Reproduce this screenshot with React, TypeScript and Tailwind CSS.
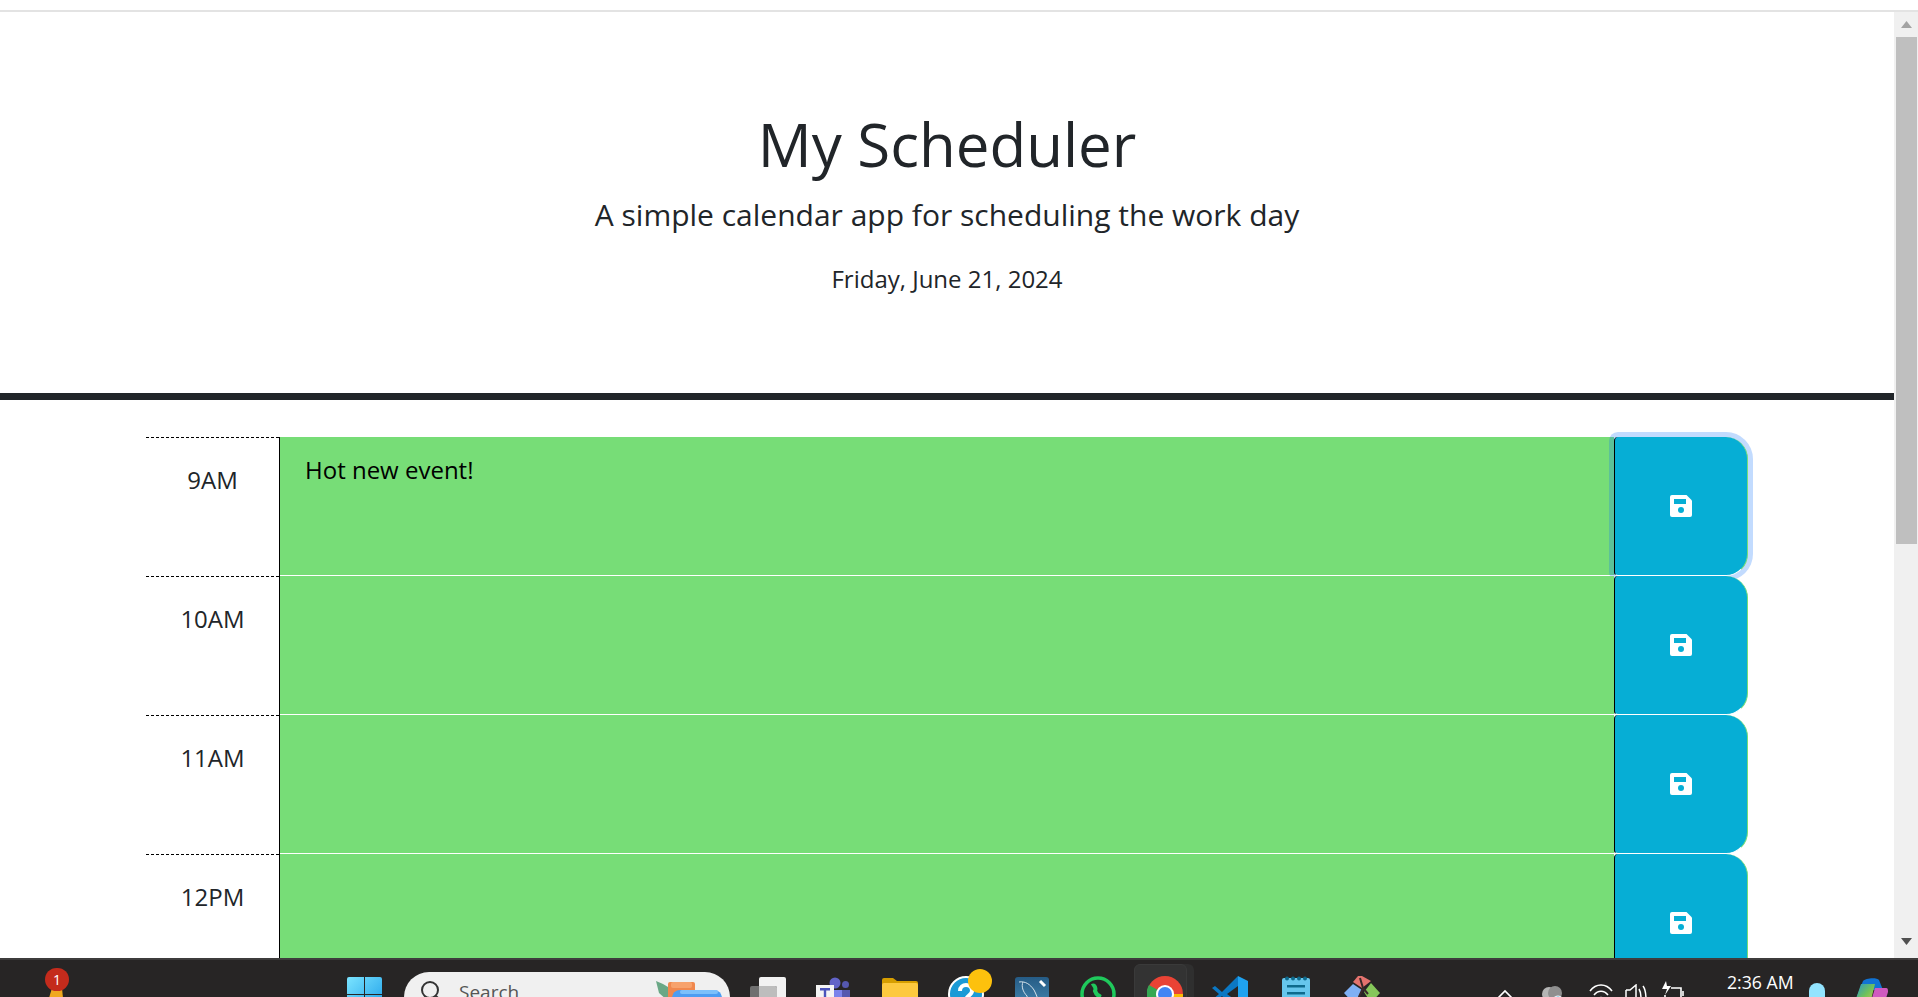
import React from "react";

const hours = ["9AM", "10AM", "11AM", "12PM"];

function SaveIcon() {
  return (
    <svg width="22" height="22" viewBox="0 0 22 22">
      <path d="M2 0H16.5L22 5.5V20a2 2 0 0 1-2 2H2a2 2 0 0 1-2-2V2a2 2 0 0 1 2-2Z" fill="#fff" />
      <rect x="4" y="4" width="12" height="5" fill="#06aed5" />
      <circle cx="11" cy="15" r="3" fill="#06aed5" />
    </svg>
  );
}

function Row({ label, text, focused }: { label: string; text?: string; focused?: boolean }) {
  return (
    <div className="flex h-[139px] w-[1602px] shrink-0">
      <div className="w-[134px] shrink-0 border-r border-r-black bg-[repeating-linear-gradient(to_right,#000_0,#000_3px,transparent_3px,transparent_5px)] bg-[length:100%_1px] bg-no-repeat pt-[21px] text-center text-[24px] leading-[44px] text-[#212529]">
        {label}
      </div>
      <textarea
        readOnly
        defaultValue={text}
        className="flex-1 resize-none border-b border-white bg-[#77dd77] px-[25px] pt-[15px] text-[24px] leading-[36px] text-black outline-none"
      />
      <button
        className={
          focused
            ? "flex w-[134px] shrink-0 items-center justify-center pr-[1px] rounded-l-[4px] rounded-r-[22px] border-l border-l-black border-r border-r-[#77dd77] border-b border-b-white bg-[#06aed5] shadow-[0_0_0_5px_rgba(13,110,253,0.25)]"
            : "flex w-[134px] shrink-0 items-center justify-center pr-[1px] rounded-l-[4px] rounded-r-[22px] border-l border-l-black border-r border-r-[#77dd77] border-b border-b-white bg-[#06aed5]"
        }
      >
        <SaveIcon />
      </button>
    </div>
  );
}

function Scrollbar() {
  return (
    <div className="flex w-[24px] shrink-0 flex-col items-center bg-[#f0f0f0]">
      <div className="flex h-[25px] w-full shrink-0 items-center justify-center">
        <svg width="11" height="7" viewBox="0 0 11 7"><path d="M5.5 0L11 7H0Z" fill="#a3a3a3" /></svg>
      </div>
      <div className="ml-[1px] h-[507px] w-[21px] shrink-0 bg-[#bfbfbf]" />
      <div className="mt-auto flex h-[21px] w-full shrink-0 items-start justify-center pt-[1px]">
        <svg width="11" height="7" viewBox="0 0 11 7"><path d="M0 0H11L5.5 7Z" fill="#505050" /></svg>
      </div>
    </div>
  );
}

function Taskbar() {
  return (
    <div className="flex h-[39px] shrink-0 items-start overflow-hidden border-t-2 border-[#3e3c3c] bg-[#272525] font-['Open_Sans',sans-serif]">
      {/* notification medal */}
      <div className="relative ml-[45px] mt-[8px] h-[40px] w-[25px] shrink-0">
        <svg className="absolute left-[1px] top-[20px]" width="18" height="20" viewBox="0 0 18 20"><path d="M6 0H16L18 20H0Z" fill="#f0a81e" /></svg>
        <div className="absolute left-0 top-0 flex h-[23px] w-[24px] items-center justify-center rounded-full bg-[#c42b1c] text-[14px] leading-none text-white">1</div>
      </div>
      {/* windows */}
      <svg className="ml-[277px] mt-[17px] shrink-0" width="35" height="35" viewBox="0 0 35 35">
        <defs><linearGradient id="w" x1="0" y1="0" x2="1" y2="1"><stop offset="0" stopColor="#7be4ff" /><stop offset="1" stopColor="#1b9de8" /></linearGradient></defs>
        <path d="M2 0H17V17H0V2a2 2 0 0 1 2-2ZM18 0H33a2 2 0 0 1 2 2V17H18ZM0 18H17V35H2a2 2 0 0 1-2-2ZM18 18H35V33a2 2 0 0 1-2 2H18Z" fill="url(#w)" />
      </svg>
      {/* search */}
      <div className="relative ml-[22px] mt-[12px] flex h-[50px] w-[326px] shrink-0 items-start rounded-[25px] bg-[#f0f0f0] pl-[16px] pt-[8px]">
        <svg width="22" height="22" viewBox="0 0 22 22" fill="none" stroke="#333" strokeWidth="2"><circle cx="10" cy="10" r="8" /><path d="M16 16l5 5" /></svg>
        <span className="ml-[17px] text-[19px] leading-[24px] text-[#555]">Search</span>
        <svg className="absolute left-[251px] top-[7px]" width="68" height="30" viewBox="0 0 68 30">
          <path d="M1 2l7 3 5 3v14L4 14Z" fill="#6aa886" />
          <rect x="13" y="3" width="27" height="24" rx="2" fill="#f0884e" />
          <rect x="16" y="3" width="21" height="6" rx="2" fill="#f7a26c" />
          <rect x="17" y="11" width="50" height="20" rx="8" fill="#4d9df2" />
          <rect x="25" y="11" width="38" height="4" rx="2" fill="#7cc0fb" />
        </svg>
      </div>
      {/* task view */}
      <svg className="ml-[20px] mt-[17px] shrink-0" width="36" height="35" viewBox="0 0 36 35">
        <rect x="9" y="0" width="27" height="32" rx="2" fill="#f2f2f2" />
        <rect x="0" y="9" width="27" height="26" rx="2" fill="#6f6f6f" />
        <path d="M9 9H25a2 2 0 0 1 2 2V32H9Z" fill="#bdbdbd" />
      </svg>
      {/* teams */}
      <svg className="ml-[30px] mt-[17px] shrink-0" width="35" height="35" viewBox="0 0 35 35">
        <circle cx="19" cy="6" r="5.5" fill="#6264c8" />
        <circle cx="29.5" cy="7.5" r="3.5" fill="#5558af" />
        <rect x="14" y="13" width="14" height="20" fill="#7b83eb" />
        <rect x="26" y="13" width="8" height="20" fill="#5558af" />
        <rect x="0" y="8" width="18" height="20" fill="#f4f4f4" />
        <path d="M4 11H14V13.5H10.2V22H7.8V13.5H4Z" fill="#4b53bc" />
      </svg>
      {/* folder */}
      <svg className="ml-[31px] mt-[18px] shrink-0" width="36" height="32" viewBox="0 0 36 32">
        <path d="M0 2a2 2 0 0 1 2-2H11L15 3H34a2 2 0 0 1 2 2V10H0Z" fill="#d69e00" />
        <rect x="0" y="5" width="36" height="27" rx="2" fill="#fdc93f" />
      </svg>
      {/* help with dot */}
      <svg className="ml-[30px] mt-[9px] shrink-0" width="44" height="44" viewBox="0 0 44 44">
        <circle cx="18" cy="25" r="17" fill="#1a9ad6" stroke="#fff" strokeWidth="2" />
        <path d="M12 22c0-8 12-8 12 0 0 4-6 5-6 9" fill="none" stroke="#fff" strokeWidth="4" />
        <circle cx="32" cy="12" r="12" fill="#fdc10d" />
      </svg>
      {/* mysql */}
      <svg className="ml-[23px] mt-[17px] shrink-0" width="34" height="35" viewBox="0 0 34 35">
        <defs><linearGradient id="m" x1="0" y1="0" x2="0" y2="1"><stop offset="0" stopColor="#255b85" /><stop offset="1" stopColor="#4a8fb8" /></linearGradient></defs>
        <rect x="0" y="0" width="34" height="35" rx="3" fill="url(#m)" />
        <path d="M4 5c6-1 11 2 15 8 2 4 4 8 4 12M8 5c-2 4 0 10 4 14l1 8" fill="none" stroke="#d4e2ea" strokeWidth="1" />
        <path d="M25 4l5 5" stroke="#fff" strokeWidth="3" />
      </svg>
      {/* whatsapp */}
      <svg className="ml-[31px] mt-[16px] shrink-0" width="36" height="36" viewBox="0 0 36 36">
        <circle cx="18" cy="18" r="16" fill="none" stroke="#1fc95c" strokeWidth="3.5" />
        <path d="M12 10c3-2 4 3 3 5 1 3 3 5 6 6" fill="none" stroke="#1fc95c" strokeWidth="4" />
      </svg>
      {/* chrome active */}
      <div className="relative ml-[18px] mt-[4px] h-[40px] w-[60px] shrink-0">
        <div className="absolute left-[7px] top-0 h-[40px] w-[53px] rounded-[6px] bg-[#2f2f2f]" />
        <div className="absolute left-0 top-0 h-[40px] w-[53px] rounded-[6px] border border-[#3a3a3a] bg-[#333333] pl-[12px] pt-[11px]">
          <svg width="36" height="36" viewBox="0 0 36 36" className="shrink-0">
            <circle cx="18" cy="18" r="18" fill="#e94335" />
            <path d="M2 9L18 18 9 34A18 18 0 0 1 2 9Z" fill="#34a853" />
            <path d="M18 18H36A18 18 0 0 1 9 34Z" fill="#fbbc04" />
            <circle cx="18" cy="18" r="9" fill="#fff" />
            <circle cx="18" cy="18" r="7" fill="#4285f4" />
          </svg>
        </div>
      </div>
      {/* vscode */}
      <svg className="ml-[18px] mt-[16px] shrink-0" width="36" height="36" viewBox="0 0 36 36">
        <path d="M26 0L36 5V31L26 36Z" fill="#1fa2f0" />
        <path d="M26 0L10 16 3 10 0 12 7 18 0 24 3 26 10 20 26 36V26L15 18 26 10Z" fill="#0b78c4" />
      </svg>
      {/* notepad */}
      <svg className="ml-[34px] mt-[16px] shrink-0" width="28" height="34" viewBox="0 0 28 34">
        <rect x="0" y="2" width="28" height="32" rx="2" fill="#66c6ec" />
        <circle cx="5" cy="2.5" r="2" fill="#0e6a8c" /><circle cx="11" cy="2.5" r="2" fill="#0e6a8c" /><circle cx="17" cy="2.5" r="2" fill="#0e6a8c" /><circle cx="23" cy="2.5" r="2" fill="#0e6a8c" />
        <rect x="5" y="9" width="18" height="2.5" fill="#0e6a8c" /><rect x="5" y="16" width="18" height="2.5" fill="#0e6a8c" />
      </svg>
      {/* pen */}
      <svg className="ml-[34px] mt-[16px] shrink-0" width="37" height="37" viewBox="0 0 37 37">
        <path d="M14 0L9 6 18 12 27 5 18 0Z" fill="#e4736e" />
        <path d="M0 17L9 8 18 14 10 28Z" fill="#7fb0f5" />
        <path d="M20 16L27 7 36 17 27 27Z" fill="#86c75a" />
        <path d="M16 2L19 12M19 12L15 21M19 12L24 18" stroke="#3a2a2a" strokeWidth="2" fill="none" />
      </svg>
      {/* tray */}
      <svg className="ml-[116px] mt-[29px] shrink-0" width="16" height="10" viewBox="0 0 16 10" fill="none" stroke="#fff" strokeWidth="1.6"><path d="M1 9L8 2l7 7" /></svg>
      <svg className="ml-[28px] mt-[26px] shrink-0" width="23" height="20" viewBox="0 0 23 20">
        <circle cx="8" cy="8" r="7" fill="#b5b5b5" />
        <circle cx="14" cy="7" r="7" fill="#8f8f8f" />
        <circle cx="17" cy="16" r="6" fill="#1a9ad6" stroke="#fff" strokeWidth="1" />
      </svg>
      <svg className="ml-[25px] mt-[24px] shrink-0" width="24" height="18" viewBox="0 0 24 18" fill="none" stroke="#fff" strokeWidth="1.6">
        <path d="M1 7C7-1 17-1 23 7" /><path d="M5 11C9 6 15 6 19 11" /><path d="M9 15c2-2 4-2 6 0" />
      </svg>
      <svg className="ml-[12px] mt-[24px] shrink-0" width="24" height="18" viewBox="0 0 24 18" fill="none" stroke="#fff" strokeWidth="1.5">
        <path d="M1 6H5L11 1V18M1 6V16" /><path d="M14 5c2 3 2 6 2 10" /><path d="M18 2c3 4 3 9 3 14" />
      </svg>
      <svg className="ml-[12px] mt-[21px] shrink-0" width="24" height="20" viewBox="0 0 24 20" fill="none" stroke="#fff" strokeWidth="1.6">
        <path d="M5 0L1 8H6L4 14L10 5H6Z" fill="#fff" stroke="none" />
        <path d="M10 7H20V18H4V14" /><path d="M22 10V15" />
      </svg>
      <div className="ml-[42px] mt-[10px] w-[66px] shrink-0 whitespace-nowrap text-[17.7px] leading-[24px] text-white">2:36 AM</div>
      <div className="ml-[16px] mt-[23px] h-[30px] w-[16px] shrink-0 rounded-[8px] bg-[#93e4ff]" />
      <svg className="ml-[28px] mt-[18px] shrink-0" width="35" height="35" viewBox="0 0 35 35">
        <defs><linearGradient id="c" x1="0" y1="0" x2="1" y2="1"><stop offset="0" stopColor="#1b8fe0" /><stop offset="0.5" stopColor="#6fc25a" /><stop offset="1" stopColor="#e5c84a" /></linearGradient></defs>
        <path d="M10 3C12 0 24-1 26 2L30 12H8L0 28Z" fill="#1173d4" />
        <path d="M8 6H22L16 30H0Z" fill="url(#c)" />
        <path d="M22 10H33C35 10 35 12 35 14L30 30H16Z" fill="#d05ac0" />
      </svg>
    </div>
  );
}

export default function App() {
  return (
    <div className="flex h-[997px] flex-col overflow-hidden bg-white font-['Open_Sans',sans-serif] text-[#212529]">
      <div className="h-[12px] shrink-0 border-b-2 border-[#e3e3e3]" />
      <div className="flex min-h-0 flex-1">
        <div className="min-w-0 flex-1 overflow-hidden">
          <header className="flex h-[388px] flex-col items-center border-b-[7px] border-[#212529] pt-[94px]">
            <h1 className="text-[60px] font-normal leading-[76px]">My Scheduler</h1>
            <p className="mt-[10px] text-[30px] font-normal leading-[45px]">A simple calendar app for scheduling the work day</p>
            <p className="mt-[24px] text-[24px] leading-[36px]">Friday, June 21, 2024</p>
          </header>
          <main className="ml-[146px] flex w-[1602px] flex-col pt-[37px]">
            {hours.map((h, i) => (
              <Row key={h} label={h} text={i === 0 ? "Hot new event!" : ""} focused={i === 0} />
            ))}
          </main>
        </div>
        <Scrollbar />
      </div>
      <Taskbar />
    </div>
  );
}
